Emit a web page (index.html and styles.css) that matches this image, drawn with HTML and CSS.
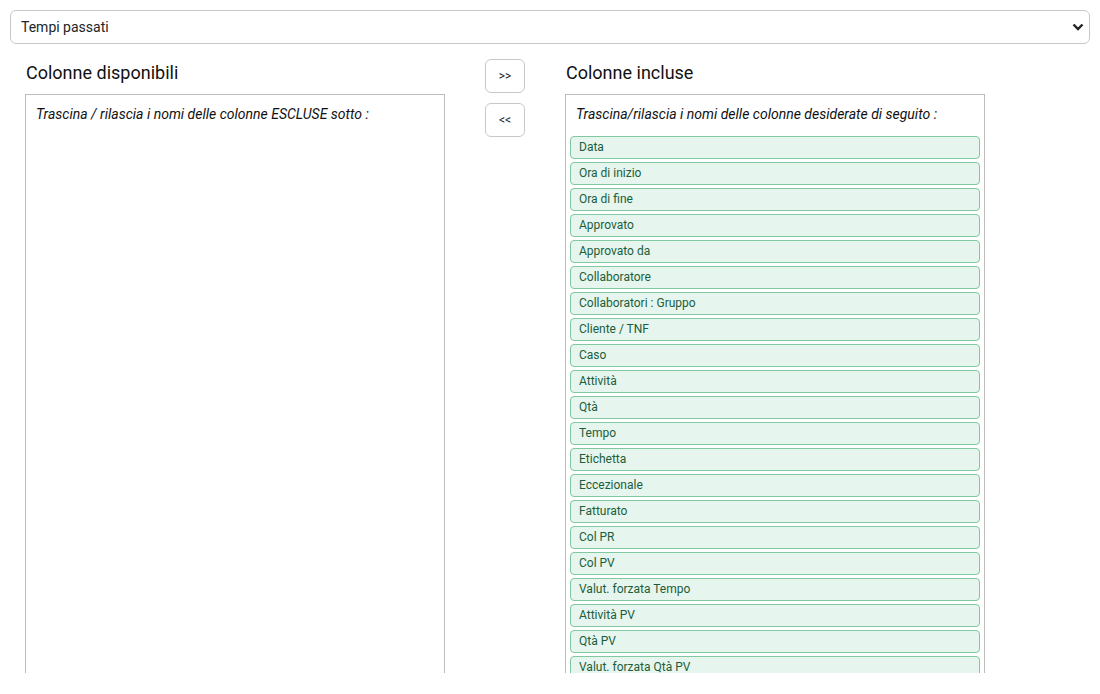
FILE: index.html
```html
<!DOCTYPE html>
<html>
<head>
  <meta charset="utf-8">
  <title>Colonne</title>
  <link rel="stylesheet" href="styles.css">
</head>
<body>
  <div class="page">
    <div class="select_wrap">
      <select class="view_select">
        <option>Tempi passati</option>
      </select>
      <svg class="select_arrow" width="12" height="8" viewBox="0 0 12 8"><path d="M1.5 1.5 L6 6 L10.5 1.5" fill="none" stroke="#222" stroke-width="2.4"/></svg>
    </div>

    <div class="columns">
      <div class="col_panel">
        <h3>Colonne disponibili</h3>
        <div class="col_box">
          <p class="hint">Trascina / rilascia i nomi delle colonne ESCLUSE sotto :</p>
        </div>
      </div>

      <div class="move_btns">
        <button class="move_btn">&gt;&gt;</button>
        <button class="move_btn">&lt;&lt;</button>
      </div>

      <div class="col_panel">
        <h3>Colonne incluse</h3>
        <div class="col_box">
          <p class="hint">Trascina/rilascia i nomi delle colonne desiderate di seguito :</p>
          <ul class="col_list">
            <li>Data</li>
            <li>Ora di inizio</li>
            <li>Ora di fine</li>
            <li>Approvato</li>
            <li>Approvato da</li>
            <li>Collaboratore</li>
            <li>Collaboratori : Gruppo</li>
            <li>Cliente / TNF</li>
            <li>Caso</li>
            <li>Attività</li>
            <li>Qtà</li>
            <li>Tempo</li>
            <li>Etichetta</li>
            <li>Eccezionale</li>
            <li>Fatturato</li>
            <li>Col PR</li>
            <li>Col PV</li>
            <li>Valut. forzata Tempo</li>
            <li>Attività PV</li>
            <li>Qtà PV</li>
            <li>Valut. forzata Qtà PV</li>
          </ul>
        </div>
      </div>
    </div>
  </div>
</body>
</html>
```

FILE: styles.css
```css
body {
  margin: 0;
  background: #fff;
  font-family: Roboto, "Liberation Sans", Arial, sans-serif;
  color: #212529;
}

.page {
  height: 673px;
  overflow: hidden;
  padding: 10px 10px 0 10px;
  box-sizing: border-box;
}

.select_wrap {
  position: relative;
}

.view_select {
  display: block;
  width: 100%;
  height: 34px;
  padding: 0 30px 0 10px;
  border: 1px solid #c8c8cc;
  border-radius: 6px;
  background: #fff;
  font-family: inherit;
  font-size: 14px;
  color: #212529;
  -webkit-appearance: none;
  appearance: none;
}

.select_arrow {
  position: absolute;
  right: 6px;
  top: 13px;
}

.columns {
  display: flex;
  align-items: flex-start;
  padding: 15px 0 0 15px;
}

.col_panel {
  width: 420px;
}

.col_panel h3 {
  margin: 3px 0 10px 1px;
  font-size: 18px;
  font-weight: 400;
  line-height: 22px;
  color: #111;
}

.col_box {
  border: 1px solid #bdbdbd;
  min-height: 700px;
  padding: 9px 4px;
}

.hint {
  margin: 0 0 12px 6px;
  font-size: 14px;
  line-height: 20px;
  font-style: italic;
  color: #111;
}

.col_list {
  list-style: none;
  margin: 0;
  padding: 0;
}

.col_list li {
  height: 23px;
  box-sizing: border-box;
  margin-bottom: 3px;
  padding: 0 8px;
  border: 1px solid #80c9a0;
  border-radius: 4px;
  background: #e6f5ee;
  color: #1b5e3b;
  font-size: 12px;
  line-height: 21px;
}

.move_btns {
  display: flex;
  flex-direction: column;
  gap: 10px;
  width: 40px;
  margin: 0 40px;
}

.move_btn {
  width: 40px;
  height: 34px;
  padding: 0;
  border: 1px solid #c8c8cc;
  border-radius: 6px;
  background: #fff;
  font-family: inherit;
  font-size: 12px;
  color: #222;
}
```
